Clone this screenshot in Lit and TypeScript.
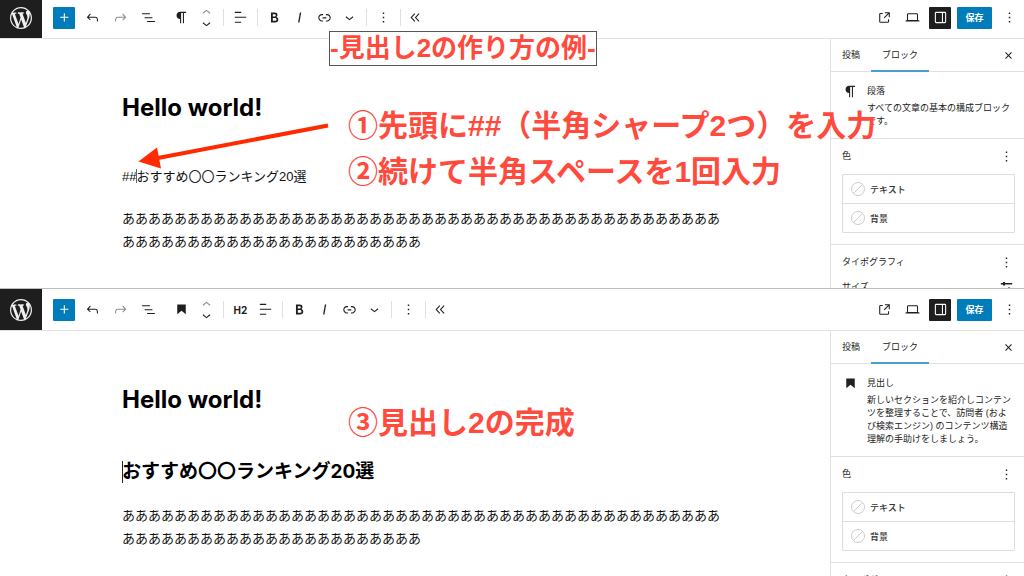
import { LitElement, html, css, svg, nothing } from "lit";
import { customElement, property } from "lit/decorators.js";

const ICONS: Record<string, string> = {
  plus: "M11 12.5V17.5H12.5V12.5H17.5V11H12.5V6H11V11H6V12.5H11Z",
  undo: "M18.3 11.7c-.6-.6-1.4-.9-2.3-.9H6.7l2.9-3.3-1.1-1-4.5 5L8.5 16l1-1-2.7-2.7H16c.5 0 .9.2 1.3.5 1 1 1 3.4 1 4.5v.3h1.5v-.2c0-1.5 0-4.3-1.5-5.7z",
  redo: "M15.6 6.5l-1.1 1 2.9 3.3H8c-.9 0-1.7.3-2.3.9-1.4 1.5-1.4 4.2-1.4 5.6v.2h1.5v-.3c0-1.1 0-3.5 1-4.5.3-.3.7-.5 1.3-.5h9.2L14.5 15l1.1 1.1 4.6-4.6-4.6-5z",
  list: "M3 6h11v1.5H3V6Zm3.5 5.5h11V13h-11v-1.5ZM21 17H10v1.5h11V17Z",
  paragraph: "m10 14v6h1.5v-14.5h2.5v14.5h1.5v-14.5h3v-1.5h-8.5c-2.76 0-5 2.24-5 5s2.24 5 5 5z",
  heading: "M6 5V18.6L12 13.85L18 18.6V5H6Z",
  up: "M6.5 12.4L12 8l5.5 4.4-.9 1.2L12 10l-4.5 3.6-1-1.2z",
  down: "M17.5 11.6L12 16l-5.5-4.4.9-1.2L12 14l4.5-3.6 1 1.2z",
  align: "M13 5.5H4V4h9v1.5Zm7 7H4V11h16v1.5Zm-7 7H4V18h9v1.5Z",
  bold: "M14.7 11.3c1-.6 1.5-1.6 1.5-3 0-2.3-1.3-3.4-4-3.4H7v14h5.8c1.4 0 2.5-.3 3.3-1 .8-.7 1.2-1.7 1.2-2.9.1-1.9-.8-3.1-2.6-3.7zm-5.1-4h2.3c.6 0 1.1.1 1.4.4.3.3.5.7.5 1.2s-.2 1-.5 1.2c-.3.3-.8.4-1.4.4H9.6V7.3zm4.6 9c-.4.3-1 .4-1.7.4H9.6v-3.9h2.9c.7 0 1.3.2 1.7.5.4.3.6.8.6 1.5s-.2 1.2-.6 1.5z",
  italic: "M12.5 5L10 19h1.9l2.5-14z",
  link: "M15.6 7.2H14v1.5h1.6c2 0 3.7 1.7 3.7 3.7s-1.7 3.7-3.7 3.7H14v1.5h1.6c2.8 0 5.2-2.3 5.2-5.2 0-2.9-2.3-5.2-5.2-5.2zM4.7 12.4c0-2 1.7-3.7 3.7-3.7H10V7.2H8.4c-2.9 0-5.2 2.3-5.2 5.2 0 2.9 2.3 5.2 5.2 5.2H10v-1.5H8.4c-2 0-3.7-1.7-3.7-3.7zm4.6.9h5.3v-1.5H9.3v1.5z",
  more: "M13 19h-2v-2h2v2zm0-6h-2v-2h2v2zm0-6h-2V5h2v2z",
  collapse: "M11.6 7l-1.1-1L5 12l5.5 6 1.1-1L7 12l4.6-5zm6 0l-1.1-1-5.5 6 5.5 6 1.1-1-4.6-5 4.6-5z",
  external: "M19.5 4.5h-7V6h4.44l-5.97 5.97 1.06 1.06L18 7.06v4.44h1.5v-7Zm-13 1a2 2 0 0 0-2 2v10a2 2 0 0 0 2 2h10a2 2 0 0 0 2-2v-3H17v3a.5.5 0 0 1-.5.5h-10a.5.5 0 0 1-.5-.5v-10a.5.5 0 0 1 .5-.5h3V5.5h-3Z",
  desktop: "M20.5 16h-.7V8c0-1.1-.9-2-2-2H6.2c-1.1 0-2 .9-2 2v8h-.7c-.8 0-1.5.7-1.5 1.5h20c0-.8-.7-1.5-1.5-1.5zM5.7 8c0-.3.2-.5.5-.5h11.6c.3 0 .5.2.5.5v7.6H5.7V8z",
  drawer: "M18 4H6c-1.1 0-2 .9-2 2v12c0 1.1.9 2 2 2h12c1.1 0 2-.9 2-2V6c0-1.1-.9-2-2-2zm-4 14.5H6c-.3 0-.5-.2-.5-.5V6c0-.3.2-.5.5-.5h8v13zm4.5-.5c0 .3-.2.5-.5.5h-2.5v-13H18c.3 0 .5.2.5.5v12z",
  close: "M12 13.06l3.712 3.713 1.061-1.06L13.061 12l3.712-3.712-1.06-1.06L12 10.938 8.288 7.227l-1.061 1.06L10.939 12l-3.712 3.712 1.06 1.061L12 13.061z",
  settings: "M4 7.200h3V5.500h3v1.700h10v1.800h-10v1.700H7V9H4zM4 15.200h10v-1.700h3v1.700h3V17h-3v1.700h-3V17H4z",
};

const WORDPRESS =
  "M20 10c0-5.51-4.49-10-10-10C4.48 0 0 4.49 0 10c0 5.52 4.48 10 10 10 5.51 0 10-4.48 10-10zM7.78 15.37L4.37 6.22c.55-.02 1.17-.08 1.17-.08.5-.06.44-1.13-.06-1.11 0 0-1.45.11-2.37.11-.18 0-.37 0-.58-.01C4.12 2.69 6.87 1.11 10 1.11c2.33 0 4.45.87 6.05 2.34-.68-.11-1.65.39-1.65 1.58 0 .74.45 1.36.9 2.1.35.61.55 1.36.55 2.46 0 1.49-1.4 5-1.4 5l-3.03-8.37c.54-.02.82-.17.82-.17.5-.05.44-1.25-.06-1.22 0 0-1.44.12-2.38.12-.87 0-2.33-.12-2.33-.12-.5-.03-.56 1.2-.06 1.22l.92.08 1.26 3.41zM17.41 10c.24-.64.74-1.87.43-4.25.7 1.29 1.05 2.71 1.05 4.25 0 3.29-1.73 6.24-4.4 7.78.97-2.59 1.94-5.2 2.92-7.78zM6.1 18.09C3.12 16.65 1.11 13.53 1.11 10c0-1.3.23-2.48.72-3.59C3.25 10.3 4.67 14.2 6.1 18.09zm4.03-6.63l2.58 6.98c-.86.29-1.76.45-2.71.45-.79 0-1.57-.11-2.29-.33.81-2.38 1.62-4.74 2.42-7.1z";

const icon = (name: string) =>
  html`<svg class="icon" viewBox="0 0 24 24" aria-hidden="true">${svg`<path d=${ICONS[name]}></path>`}</svg>`;

const tool = (name: string, label: string, cls = "tool") =>
  html`<button class=${cls} type="button" aria-label=${label}>${icon(name)}</button>`;

@customElement("block-editor")
class BlockEditor extends LitElement {
  @property() block: "paragraph" | "heading" = "paragraph";

  static styles = css`
    :host {
      display: flex;
      flex-direction: column;
      background: #fff;
      color: #1e1e1e;
      font-family: "Liberation Sans", "Noto Sans CJK JP", sans-serif;
    }
    * { box-sizing: border-box; }
    button {
      margin: 0;
      padding: 0;
      border: 0;
      background: none;
      color: inherit;
      font: inherit;
    }
    h1, h2, h3, p { margin: 0; }
    .icon { display: block; width: 17px; height: 17px; fill: currentColor; flex: none; }
    .bar {
      display: flex;
      flex: none;
      height: 42px;
      border-bottom: 1px solid #e3e3e3;
    }
    .logo {
      display: grid;
      place-items: center;
      width: 42px;
      background: #1e1e1e;
      color: #f0f0f0;
    }
    .mark { width: 22px; height: 22px; fill: currentColor; display: block; }
    .tools, .actions, .group { display: flex; align-items: center; }
    .tools { padding-left: 11px; }
    .actions { margin-left: auto; padding-right: 2px; }
    .tool, .wide, .square, .small {
      display: flex;
      align-items: center;
      justify-content: center;
    }
    .tool { width: 25px; height: 25px; }
    .wide { width: 28px; height: 25px; }
    .square { width: 22px; height: 22px; border-radius: 1px; margin-right: 3px; }
    .blue { background: #007cba; color: #fff; }
    .dark { background: #1e1e1e; color: #fff; margin: 0 6px 0 3px; }
    .off { opacity: 0.5; }
    .group { padding: 0 4px; height: 17px; border-right: 1px solid #e0e0e0; }
    .first { margin-left: 3px; }
    .last { border-right: 0; padding-left: 2px; }
    .level { font-family: "Inter", sans-serif; font-weight: 700; font-size: 10px; }
    .mover { display: flex; flex-direction: column; }
    .small { width: 25px; height: 11px; }
    .save {
      width: 35px;
      height: 22px;
      margin-right: 5px;
      border-radius: 1px;
      font-size: 9px;
      font-weight: 700;
    }
    .body { display: grid; grid-template-columns: minmax(0, 1fr) 194px; flex: 1; min-height: 0; }
    .canvas { padding: 53px 100px 0 122px; color: #000; }
    .title { font-family: "Inter", sans-serif; font-size: 24px; line-height: 32px; margin-bottom: 41px; }
    .text { font-size: 13px; line-height: 23px; margin-bottom: 19px; color: #111; }
    .sub { font-family: "Inter", "Noto Sans CJK JP", sans-serif; font-size: 19px; line-height: 30px; margin-bottom: 17px; }
    .caret {
      display: inline-block;
      width: 1px;
      height: 14px;
      margin-right: -1px;
      vertical-align: -2px;
      background: #666;
    }
    .tall { height: 22px; vertical-align: -5px; background: #222; }
    .side { border-left: 1px solid #e0e0e0; font-size: 9px; color: #222; }
    .tabs { display: flex; height: 33px; border-bottom: 1px solid #e0e0e0; }
    .tab { padding: 0 11px 1px; height: 33px; border-bottom: 2px solid transparent; }
    .current { border-bottom-color: #4a9fd0; }
    .close { margin-left: auto; margin-right: 3px; height: 32px; }
    .card {
      display: grid;
      grid-template-columns: 16px minmax(0, 1fr);
      column-gap: 9px;
      padding: 11px 9px 10px 11px;
      border-bottom: 1px solid #e0e0e0;
    }
    .name { font-size: 9px; line-height: 16px; font-weight: 400; margin-bottom: 3px; }
    .about { line-height: 13px; }
    .section { padding: 8px 9px 11px 11px; border-bottom: 1px solid #e0e0e0; }
    .head { display: flex; align-items: center; justify-content: space-between; height: 18px; }
    .name-of { font-size: 9px; line-height: 18px; font-weight: 400; }
    .dots { display: block; }
    .list { margin-top: 9px; border: 1px solid #ddd; border-radius: 1px; }
    .item {
      display: flex;
      align-items: center;
      gap: 5px;
      width: 100%;
      height: 28px;
      padding-left: 8px;
      color: #333;
      font-weight: 500;
    }
    .item + .item { height: 29px; border-top: 1px solid #ddd; }
    .swatch { width: 14px; height: 14px; fill: none; stroke: #ccc; display: block; }
    .size { display: flex; align-items: center; justify-content: space-between; margin-top: 6px; height: 18px; }
  `;

  private swatch(label: string) {
    return html`<button class="item" type="button">
      <svg class="swatch" viewBox="0 0 14 14" aria-hidden="true">
        <circle cx="7" cy="7" r="6.5"></circle><path d="M2.5 11.5L11.5 2.5"></path>
      </svg>${label}
    </button>`;
  }

  render() {
    const heading = this.block === "heading";
    return html`
      <header class="bar">
        <a class="logo" href="#" aria-label="WordPress">
          <svg class="mark" viewBox="0 0 20 20" aria-hidden="true"><path d=${WORDPRESS}></path></svg>
        </a>
        <div class="tools">
          ${tool("plus", "ブロックを追加", "square blue")}
          ${tool("undo", "元に戻す", "wide")}
          ${tool("redo", "やり直す", "wide off")}
          ${tool("list", "リスト表示", "wide")}
          <div class="group first">
            ${tool(this.block, heading ? "見出し" : "段落")}
            <div class="mover">
              ${tool("up", "上に移動", "small off")}
              ${tool("down", "下に移動", "small")}
            </div>
          </div>
          <div class="group">
            ${heading ? html`<button class="tool level" type="button">H2</button>` : nothing}
            ${tool("align", "配置")}
          </div>
          <div class="group">
            ${tool("bold", "太字")}${tool("italic", "イタリック")}${tool("link", "リンク")}${tool("down", "さらに表示")}
          </div>
          <div class="group">${tool("more", "オプション")}</div>
          <div class="group last">${tool("collapse", "ツールを隠す")}</div>
        </div>
        <div class="actions">
          ${tool("external", "投稿を表示", "wide")}
          ${tool("desktop", "表示", "wide")}
          ${tool("drawer", "設定", "square dark")}
          <button class="save blue" type="button">保存</button>
          ${tool("more", "オプション")}
        </div>
      </header>
      <div class="body">
        <main class="canvas">
          <h1 class="title">Hello world!</h1>
          ${heading
            ? html`<h2 class="sub"><span class="caret tall"></span>おすすめ〇〇ランキング20選</h2>`
            : html`<p class="text">##<span class="caret"></span>おすすめ〇〇ランキング20選</p>`}
          <p class="text">${"あ".repeat(69)}</p>
        </main>
        <aside class="side">
          <div class="tabs">
            <button class="tab" type="button">投稿</button>
            <button class="tab current" type="button">ブロック</button>
            ${tool("close", "閉じる", "small close")}
          </div>
          <div class="card">
            ${icon(this.block)}
            <div>
              <h2 class="name">${heading ? "見出し" : "段落"}</h2>
              <p class="about">${heading
                ? "新しいセクションを紹介しコンテンツを整理することで、訪問者 (および検索エンジン) のコンテンツ構造理解の手助けをしましょう。"
                : "すべての文章の基本の構成ブロックです。"}</p>
            </div>
          </div>
          <section class="section">
            <div class="head"><h3 class="name-of">色</h3>${tool("more", "色のオプション", "dots")}</div>
            <div class="list">${this.swatch("テキスト")}${this.swatch("背景")}</div>
          </section>
          <section class="section">
            <div class="head"><h3 class="name-of">タイポグラフィ</h3>${tool("more", "タイポグラフィのオプション", "dots")}</div>
            <div class="size">サイズ${tool("settings", "カスタムサイズ", "dots")}</div>
          </section>
        </aside>
      </div>
    `;
  }
}

@customElement("app-root")
class AppRoot extends LitElement {
  static styles = css`
    :host {
      display: grid;
      grid-template-rows: minmax(0, 1fr) minmax(0, 1fr);
      position: relative;
      height: 100vh;
      overflow: hidden;
      background: #fff;
      font-family: "Liberation Sans", "Noto Sans CJK JP", sans-serif;
    }
    .frame { overflow: hidden; }
    .before { margin-top: -3px; }
    .after { border-top: 1px solid #bdbdbd; }
    .note {
      position: absolute;
      margin: 0;
      color: #ff4b3e;
      font-size: 30px;
      line-height: 46px;
      font-weight: 700;
      white-space: nowrap;
    }
    .banner {
      left: 329px;
      top: 31px;
      font-size: 26px;
      line-height: 33px;
      background: #fff;
      border: 1px solid #555;
    }
    .steps { left: 348px; top: 103px; }
    .done { left: 348px; top: 400px; }
    .line { display: block; }
    .arrow { position: absolute; left: 136px; top: 120px; width: 196px; height: 52px; }
  `;

  render() {
    return html`
      <div class="frame before"><block-editor block="paragraph"></block-editor></div>
      <div class="frame after"><block-editor block="heading"></block-editor></div>
      <p class="note banner">-見出し2の作り方の例-</p>
      <p class="note steps">
        <span class="line">①先頭に##（半角シャープ2つ）を入力</span>
        <span class="line">②続けて半角スペースを1回入力</span>
      </p>
      <p class="note done">③見出し2の完成</p>
      <svg class="arrow" viewBox="0 0 196 52" aria-hidden="true">
        <path d="M22 38L192 5.5" stroke="#ff2a00" stroke-width="4"></path>
        <path d="M2.5 41.5L21 27.5L25 48.5Z" fill="#ff2a00"></path>
      </svg>
    `;
  }
}
